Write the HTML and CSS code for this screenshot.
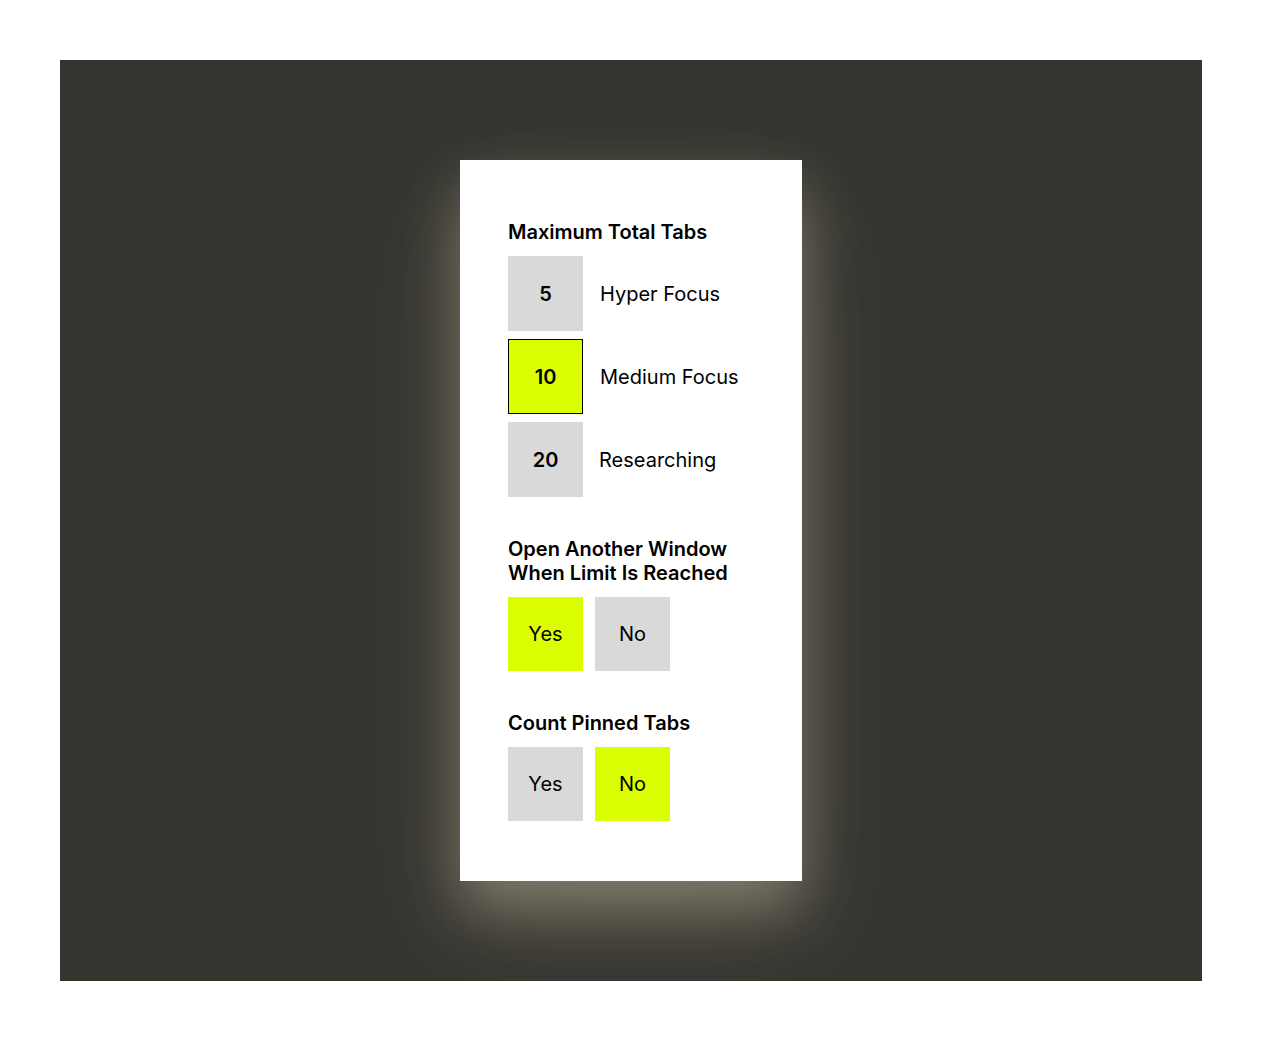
FILE: index.html
```html
<!DOCTYPE html>
<html>
<head>
<meta charset="utf-8">
<link rel="stylesheet" href="styles.css">
</head>
<body>
<div class="stage">
  <div class="card">
    <section class="group">
      <h2 class="title">Maximum Total Tabs</h2>
      <div class="tab-list">
        <div class="tab-row">
          <div class="box num">5</div>
          <span class="label">Hyper Focus</span>
        </div>
        <div class="tab-row">
          <div class="box num active outlined">10</div>
          <span class="label">Medium Focus</span>
        </div>
        <div class="tab-row">
          <div class="box num">20</div>
          <span class="label label-r">Researching</span>
        </div>
      </div>
    </section>
    <section class="group">
      <h2 class="title">Open Another Window When Limit Is Reached</h2>
      <div class="choices">
        <div class="box active">Yes</div>
        <div class="box">No</div>
      </div>
    </section>
    <section class="group">
      <h2 class="title">Count Pinned Tabs</h2>
      <div class="choices">
        <div class="box">Yes</div>
        <div class="box active">No</div>
      </div>
    </section>
  </div>
</div>
</body>
</html>
```
FILE: styles.css
```css
* { box-sizing: border-box; }
html, body { margin: 0; padding: 0; background: #fff; }
body {
  padding: 60px;
  font-family: Inter, "Noto Sans", sans-serif;
  color: #000;
}
.stage {
  height: 921px;
  background: #353530;
  display: flex;
  align-items: center;
  justify-content: center;
  overflow: hidden;
}
.card {
  width: 342px;
  height: 721px;
  background: #fff;
  padding: 60px 48px;
  display: flex;
  flex-direction: column;
  gap: 40px;
  box-shadow: 0 28px 55px rgba(255, 238, 205, 0.32), 0 50px 110px rgba(255, 235, 200, 0.1);
}
.group {
  display: flex;
  flex-direction: column;
  gap: 12px;
}
.title {
  margin: 0;
  font-size: 20px;
  line-height: 24px;
  font-weight: 600;
}
.tab-list {
  display: flex;
  flex-direction: column;
  gap: 8px;
}
.tab-row {
  display: flex;
  align-items: center;
  gap: 17px;
}
.box {
  width: 75px;
  height: 74px;
  background: #d9d9d9;
  display: flex;
  align-items: center;
  justify-content: center;
  font-size: 20px;
  font-weight: 400;
  flex-shrink: 0;
}
.tab-list .box { height: 75px; }
.box.num { font-weight: 600; }
.box.active { background: #dbff00; }
.box.outlined { border: 1px solid #000; }
.label {
  font-size: 20px;
  font-weight: 400;
}
.label-r { margin-left: -1px; }
.choices {
  display: flex;
  gap: 12px;
}
```
